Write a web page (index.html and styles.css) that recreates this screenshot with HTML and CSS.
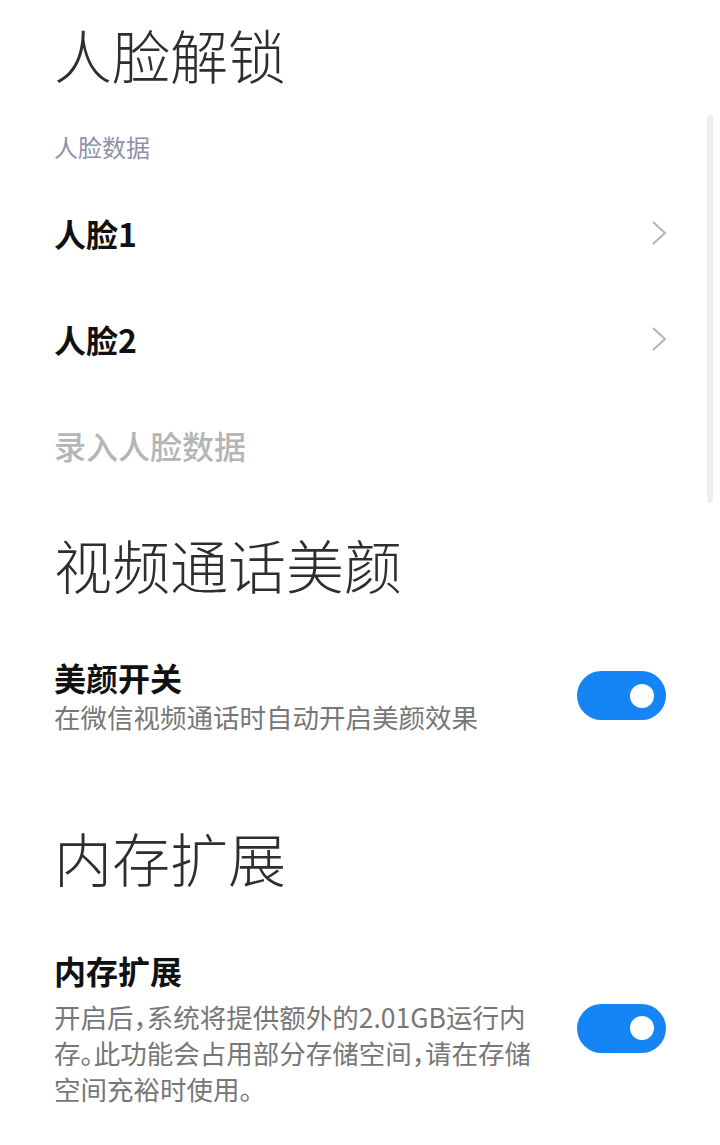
FILE: index.html
```html
<!DOCTYPE html>
<html lang="zh-CN">
<head>
    <meta charset="UTF-8">
    <meta name="viewport" content="width=device-width, initial-scale=1.0">
    <title>人脸解锁</title>
    <link rel="stylesheet" href="styles.css">
</head>
<body>
    <div class="page">
        <!-- 人脸解锁 -->
        <h1 class="section-title first">人脸解锁</h1>
        <div class="group-label">人脸数据</div>

        <div class="nav-row">
            <span class="nav-text">人脸1</span>
            <svg class="chevron" width="16" height="26" viewBox="0 0 16 26">
                <polyline points="2,2 14,13 2,24" fill="none" stroke="#b3b3b3" stroke-width="2"/>
            </svg>
        </div>
        <div class="nav-row">
            <span class="nav-text">人脸2</span>
            <svg class="chevron" width="16" height="26" viewBox="0 0 16 26">
                <polyline points="2,2 14,13 2,24" fill="none" stroke="#b3b3b3" stroke-width="2"/>
            </svg>
        </div>
        <div class="nav-row">
            <span class="nav-text disabled">录入人脸数据</span>
        </div>

        <!-- 视频通话美颜 -->
        <h1 class="section-title">视频通话美颜</h1>
        <div class="switch-row">
            <div class="switch-text">
                <div class="switch-title">美颜开关</div>
                <div class="switch-desc">在微信视频通话时自动开启美颜效果</div>
            </div>
            <div class="toggle on"><span class="knob"></span></div>
        </div>

        <!-- 内存扩展 -->
        <h1 class="section-title">内存扩展</h1>
        <div class="switch-row">
            <div class="switch-text">
                <div class="switch-title">内存扩展</div>
                <div class="switch-desc long">开启后，系统将提供额外的2.01GB运行内存。此功能会占用部分存储空间，请在存储空间充裕时使用。</div>
            </div>
            <div class="toggle on"><span class="knob"></span></div>
        </div>
    </div>

    <div class="scrollbar"></div>
</body>
</html>
```

FILE: styles.css
```css
body {
    margin: 0;
    background: #ffffff;
    font-family: "Noto Sans CJK SC", "Noto Sans", sans-serif;
}
.page {
    padding: 14px 54px 0;
}
.section-title {
    margin: 26px 0 0;
    font-size: 58px;
    line-height: 80px;
    font-weight: 300;
    color: #2e2e2e;
}
.section-title.first {
    margin-top: 0;
}
.group-label {
    margin: 33px 0 13px;
    font-size: 24px;
    line-height: 40px;
    color: #8d91a7;
}
.nav-row {
    height: 106px;
    display: flex;
    align-items: center;
    justify-content: space-between;
}
.nav-text {
    font-size: 32px;
    font-weight: 700;
    color: #111111;
}
.nav-text.disabled {
    font-weight: 500;
    color: #b5b5b5;
}
.chevron {
    margin-right: -1px;
}
.switch-row {
    margin: 53px 0 82px;
    display: flex;
    align-items: center;
}
.switch-row:last-child {
    margin-bottom: 0;
}
.switch-text {
    flex: 1;
    margin-right: 36px;
}
.switch-title {
    font-size: 32px;
    line-height: 40px;
    font-weight: 700;
    color: #111111;
}
.switch-desc {
    margin-top: 2px;
    font-size: 26.5px;
    line-height: 35.5px;
    color: #777777;
    font-feature-settings: "halt";
}
.switch-desc.long {
    margin-top: 9px;
    line-height: 36px;
}
.toggle {
    width: 89px;
    height: 49px;
    border-radius: 25px;
    background: #1584f4;
    display: flex;
    align-items: center;
    justify-content: flex-end;
    padding-right: 12px;
    box-sizing: border-box;
    flex-shrink: 0;
}
.knob {
    width: 24px;
    height: 24px;
    border-radius: 50%;
    background: #ffffff;
}
.scrollbar {
    position: absolute;
    left: 707px;
    top: 115px;
    width: 6px;
    height: 388px;
    border-radius: 3px;
    background: #eeeeee;
}
```
